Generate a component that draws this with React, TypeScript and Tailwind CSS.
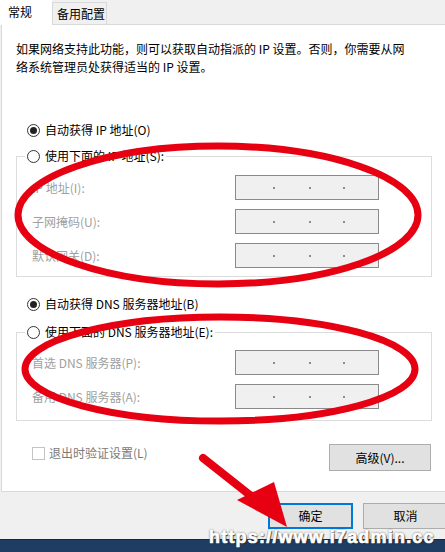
import React from "react";

function Radio({ checked }: { checked?: boolean }) {
  return (
    <span className="w-[13px] h-[13px] rounded-full border border-[#333333] bg-white flex items-center justify-center shrink-0">
      {checked && <span className="w-[7px] h-[7px] rounded-full bg-[#222222]" />}
    </span>
  );
}

function IpBox() {
  return (
    <div className="w-[144px] h-[25px] border border-[#8a8a8a] bg-[#f0f0f0] flex items-center pl-[37px]">
      <span className="w-[2px] h-[2px] bg-[#8c8c8c]" />
      <span className="w-[2px] h-[2px] bg-[#8c8c8c] ml-[34px]" />
      <span className="w-[2px] h-[2px] bg-[#8c8c8c] ml-[32px]" />
    </div>
  );
}

function Row({ label }: { label: string }) {
  return (
    <div className="flex items-center justify-between h-[25px] pl-[7px] pr-[44px]">
      <span className="text-[#a0a0a0] leading-[18px]">{label}</span>
      <IpBox />
    </div>
  );
}

function Group({ legend, rows, pt, pb }: { legend: string; rows: string[]; pt: string; pb: string }) {
  return (
    <fieldset className={`border border-[#dcdcdc] px-[8px] ${pb}`}>
      <legend className="px-[2px] h-[18px] flex items-center gap-[5px] leading-[18px]">
        <Radio />
        <span className="text-black">{legend}</span>
      </legend>
      <div className={`flex flex-col gap-[9px] ${pt}`}>
        {rows.map((r) => (
          <Row key={r} label={r} />
        ))}
      </div>
    </fieldset>
  );
}

export default function App() {
  return (
    <div className="relative w-[445px] h-[552px] overflow-hidden bg-[#f0f0f0] font-['Noto_Sans_CJK_SC',sans-serif] text-[12px] text-black">
      {/* tabs */}
      <div className="flex h-[25px]">
        <div className="w-[52px] bg-white pl-[8px] pt-[3px] leading-[18px]">常规</div>
        <div className="w-[55px] mt-[2px] border border-[#d9d9d9] bg-[#f0f0f0] pl-[4px] pt-[2px] leading-[18px]">
          备用配置
        </div>
        <div className="flex-1 border-b border-[#d9d9d9]" />
      </div>

      {/* panel */}
      <div className="ml-[1px] h-[467px] bg-white border-l border-b border-[#d9d9d9] pl-[14px] pr-[13px] pt-[15px] flex flex-col">
        <p className="leading-[18px]">
          如果网络支持此功能，则可以获取自动指派的 IP 设置。否则，你需要从网
          <br />
          络系统管理员处获得适当的 IP 设置。
        </p>

        <div className="mt-[45px] h-[18px] flex items-center gap-[5px] pl-[11px] leading-[18px]">
          <Radio checked />
          <span>自动获得 IP 地址(O)</span>
        </div>

        <div className="mt-[8px]">
          <Group
            legend="使用下面的 IP 地址(S):"
            rows={["IP 地址(I):", "子网掩码(U):", "默认网关(D):"]}
            pt="pt-[10px]"
            pb="pb-[8px]"
          />
        </div>

        <div className="mt-[18px] h-[18px] flex items-center gap-[5px] pl-[11px] leading-[18px]">
          <Radio checked />
          <span>自动获得 DNS 服务器地址(B)</span>
        </div>

        <div className="mt-[10px]">
          <Group
            legend="使用下面的 DNS 服务器地址(E):"
            rows={["首选 DNS 服务器(P):", "备用 DNS 服务器(A):"]}
            pt="pt-[9px]"
            pb="pb-[11px]"
          />
        </div>

        <div className="mt-[23px] flex items-start justify-between">
          <div className="ml-[16px] mt-[2px] flex items-center gap-[4px]">
            <span className="w-[13px] h-[13px] border border-[#c4c4c4] bg-white" />
            <span className="text-[#7a7a7a] leading-[14px]">退出时验证设置(L)</span>
          </div>
          <button className="mr-[1px] w-[102px] h-[27px] bg-[#e1e1e1] border border-[#adadad] flex items-center justify-center">
            高级(V)...
          </button>
        </div>
      </div>

      {/* bottom buttons */}
      <div className="h-[47px] flex items-start pt-[11px] pl-[268px] gap-[10px]">
        <button className="w-[85px] h-[26px] shrink-0 bg-[#e1e1e1] border-2 border-[#0078d7] flex items-center justify-center">
          确定
        </button>
        <button className="w-[85px] h-[26px] shrink-0 bg-[#e1e1e1] border border-[#adadad] flex items-center justify-center">
          取消
        </button>
      </div>

      {/* dark bar */}
      <div className="h-[13px] bg-[#1f3d63] border-t border-[#1a2a3c]" />

      {/* watermark */}
      <div className="absolute left-[209px] top-[527px] font-['Liberation_Sans',sans-serif] font-bold text-[18px] leading-[20px] tracking-[1.2px] text-white [-webkit-text-stroke:0.7px_white] [text-shadow:0_0_2px_#2a2a2a,1px_1px_1px_#2a2a2a]">
        https://www.i7admin.cc
      </div>

      {/* red annotations */}
      <svg className="absolute left-0 top-0 pointer-events-none" width="445" height="552" viewBox="0 0 445 552">
        <ellipse cx="218" cy="215" rx="200" ry="69" fill="none" stroke="#e60012" strokeWidth="7" />
        <ellipse cx="220" cy="369" rx="195" ry="52" fill="none" stroke="#e60012" strokeWidth="7" />
        <line x1="203" y1="458" x2="260" y2="503" stroke="#e60012" strokeWidth="8" strokeLinecap="round" />
        <polygon points="237,500 274,482 287,527" fill="#e60012" />
      </svg>
    </div>
  );
}
